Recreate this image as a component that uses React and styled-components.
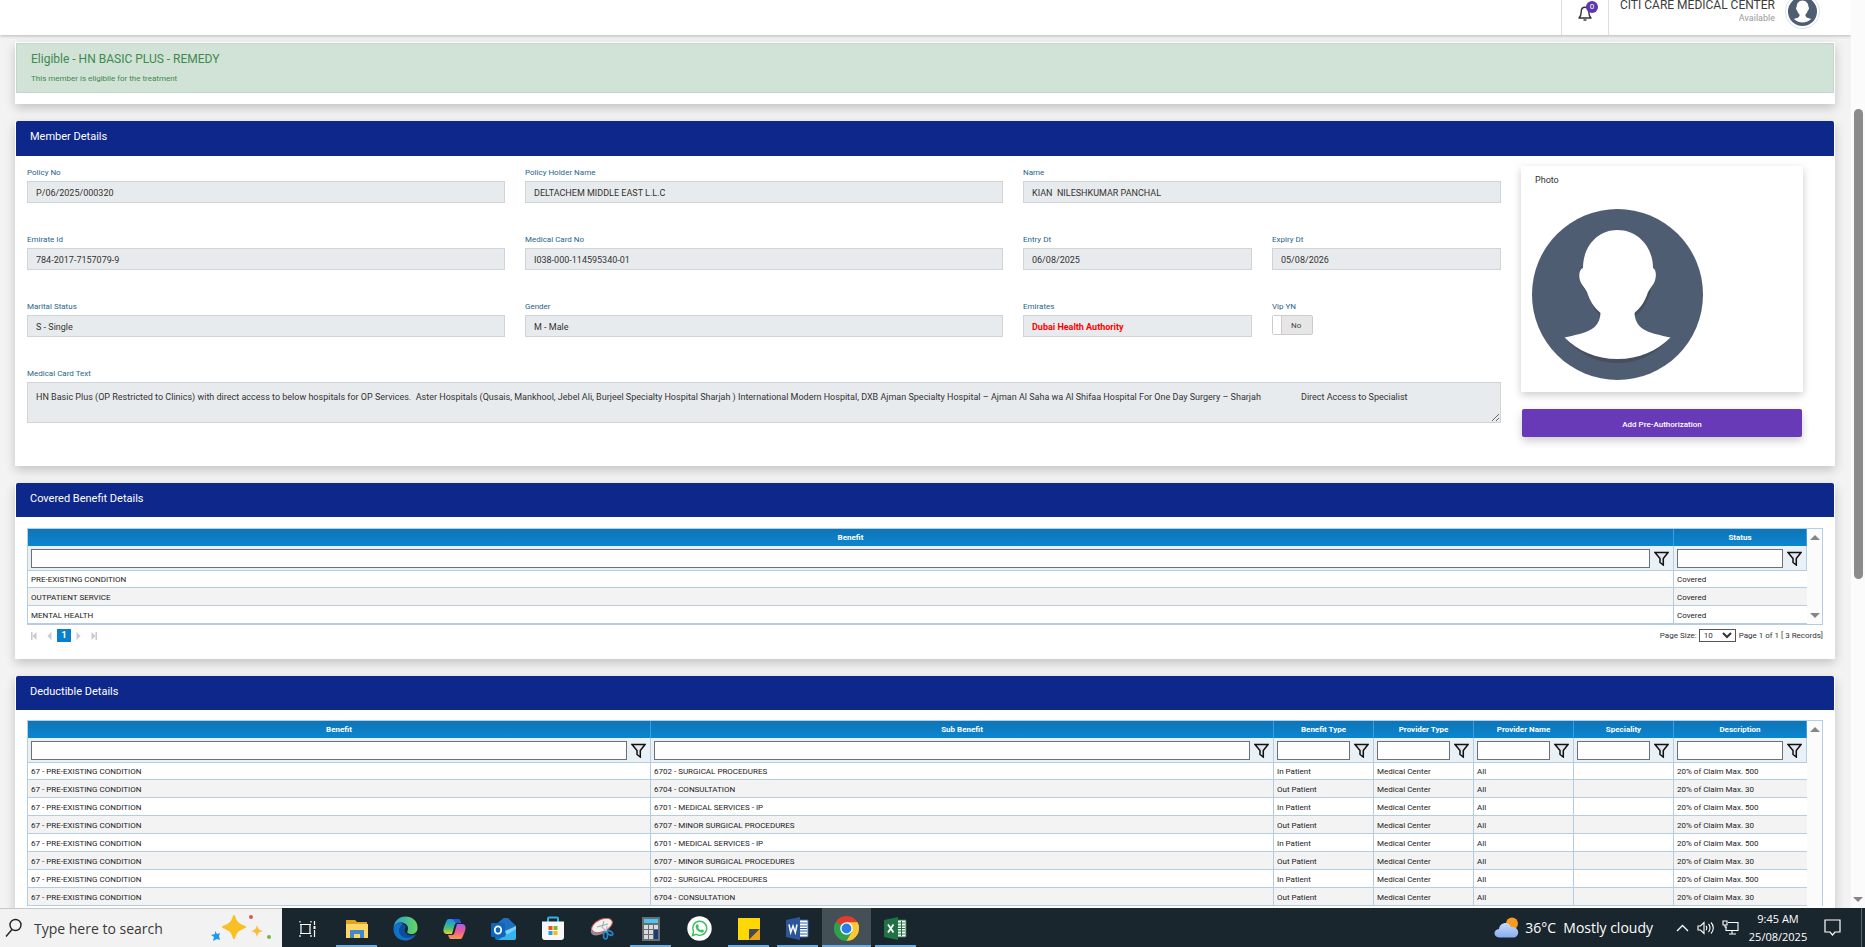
import React from 'react';
import styled, { createGlobalStyle, css } from 'styled-components';

const GlobalStyle = createGlobalStyle`
    * {
        box-sizing: border-box;
    }
    body {
        margin: 0;
        font-family: Roboto, sans-serif;
        color: #333;
        background: #f3f3f3;
    }
    input, select, textarea, button {
        font-family: inherit;
    }
`;

const Screen = styled.div`
    display: flex;
    flex-direction: column;
    height: 100vh;
    overflow: hidden;
`;

const Viewport = styled.div`
    display: flex;
    flex: 1;
    min-height: 0;
`;

const Page = styled.div`
    display: flex;
    flex-direction: column;
    flex: 1;
    min-width: 0;
    overflow: hidden;
`;

const PageScrollbar = styled.div`
    display: flex;
    flex-direction: column;
    align-items: center;
    justify-content: space-between;
    width: 14px;
    padding: 109px 0 6px;
    background: #fbfbfb;
`;

const Thumb = styled.div`
    width: 9px;
    height: 470px;
    border-radius: 5px;
    background: #8b8b8b;
`;

const Triangle = styled.span`
    width: 0;
    height: 0;
    border: 5px solid transparent;
    ${({ $down }) => $down ? css`
        border-bottom: 0;
        border-top-color: #858585;
    ` : css`
        border-top: 0;
        border-bottom-color: #858585;
    `}
`;

/* header */

const HeaderClip = styled.header`
    display: flex;
    align-items: flex-end;
    flex: none;
    height: 35px;
    overflow: hidden;
    background: #fff;
    box-shadow: 0 1px 3px rgba(0, 0, 0, 0.25);
    z-index: 1;
`;

const HeaderBar = styled.div`
    display: flex;
    align-items: center;
    justify-content: flex-end;
    flex: 1;
    height: 48px;
    padding-right: 31px;
`;

const BellButton = styled.button`
    position: relative;
    display: flex;
    align-items: center;
    justify-content: center;
    width: 48px;
    height: 100%;
    padding: 4px 0 0;
    border: solid #dedede;
    border-width: 0 1px;
    background: none;
`;

const Badge = styled.span`
    position: absolute;
    top: 14px;
    left: 24px;
    width: 12px;
    height: 12px;
    border-radius: 6px;
    background: #5d37ae;
    color: #fff;
    font-size: 8px;
    line-height: 12px;
`;

const Account = styled.div`
    display: flex;
    flex-direction: column;
    align-items: flex-end;
    width: 166px;
    margin-right: 10px;
    font-size: 12px;
    line-height: 14px;
    white-space: nowrap;
    color: #3c3c3c;
    span {
        font-size: 9px;
        line-height: 12px;
        color: #999;
    }
`;

const AvatarRing = styled.div`
    display: flex;
    padding: 2px;
    border: 1px solid #dde3ea;
    border-radius: 50%;
`;

/* cards */

const Content = styled.main`
    display: flex;
    flex-direction: column;
    gap: 17px;
    padding: 7px 16px 0 15px;
`;

const Card = styled.section`
    flex: none;
    padding: 0 1px ${({ $bottom }) => $bottom}px;
    background: #fff;
    box-shadow: 0 4px 10px rgba(0, 0, 0, 0.2);
`;

const Alert = styled.div`
    margin-top: 1px;
    height: 50px;
    padding: 6px 14px;
    border: 1px solid #c1d8c8;
    background: #d1e2d7;
    color: #3f8a4e;
`;

const AlertTitle = styled.h1`
    margin: 0;
    font-size: 12px;
    font-weight: 400;
    line-height: 18px;
`;

const AlertText = styled.p`
    margin: 5px 0 0;
    font-size: 8px;
    line-height: 12px;
`;

const CardTitle = styled.h2`
    margin: 0;
    height: ${({ $tall }) => $tall ? 35 : 34}px;
    padding: 8px 14px;
    border-radius: 2px 2px 0 0;
    background: #0d278a;
    color: #fff;
    font-size: 11px;
    font-weight: 400;
    line-height: 16px;
`;

const MemberBody = styled.div`
    display: flex;
    align-items: flex-start;
    gap: 20px;
    padding: 10px 31px 0 11px;
`;

const Form = styled.form`
    display: grid;
    grid-template-columns: repeat(6, 1fr);
    column-gap: 20px;
    row-gap: 31px;
    flex: 1;
    padding-top: 1px;
`;

const Field = styled.div`
    display: flex;
    flex-direction: column;
    align-items: stretch;
    grid-column: span ${({ $span }) => $span};
    min-width: 0;
`;

const Label = styled.label`
    margin-bottom: 3px;
    color: #26658a;
    font-size: 8px;
    line-height: 11px;
`;

const control = css`
    width: 100%;
    border: 1px solid #cfd4d9;
    border-radius: 0;
    background: #e8ebed;
    color: ${({ $alert }) => $alert ? '#f00' : '#333'};
    font-size: 9px;
    font-weight: ${({ $alert }) => $alert ? 700 : 400};
    outline: 0;
`;

const TextInput = styled.input`
    ${control}
    height: 22px;
    padding: 1px 8px 0;
`;

const TextArea = styled.textarea`
    ${control}
    display: block;
    height: 41px;
    padding: 8px;
    line-height: 12px;
`;

const Toggle = styled.label`
    display: flex;
    align-items: center;
    width: 41px;
    height: 20px;
    border: 1px solid #ccc;
    border-radius: 2px;
    background: #e6e6e6;
    font-size: 8px;
    color: #444;
    input {
        appearance: none;
        width: 9px;
        height: 18px;
        margin: 0 9px 0 0;
        border-right: 1px solid #ccc;
        background: #fff;
    }
`;

const Side = styled.aside`
    display: flex;
    flex-direction: column;
    gap: 17px;
    width: 282px;
`;

const PhotoCard = styled.figure`
    margin: 0;
    height: 226px;
    padding: 7px 11px;
    background: #fff;
    box-shadow: 0 3px 8px rgba(0, 0, 0, 0.2);
    svg {
        display: block;
    }
`;

const PhotoCaption = styled.figcaption`
    margin: 0 0 21px 3px;
    font-size: 9px;
    line-height: 15px;
`;

const PrimaryButton = styled.button`
    height: 28px;
    margin: 0 1px;
    padding: 2px 0 0;
    border: 0;
    border-radius: 2px;
    background: #683ab7;
    box-shadow: 0 4px 8px rgba(0, 0, 0, 0.2);
    color: #fff;
    font-size: 8px;
    font-weight: 500;
`;

/* grids */

const GridWrap = styled.div`
    padding: ${({ $top }) => $top}px 11px 0;
`;

const GridFrame = styled.div`
    display: flex;
    border: 1px solid #b5cde2;
    border-top-color: #a9d3ef;
    ${({ $cut }) => $cut && 'border-bottom: 0;'}
`;

const Table = styled.table`
    flex: 1;
    width: 100%;
    table-layout: fixed;
    border-collapse: separate;
    border-spacing: 0;
    font-size: 8px;
`;

const HeadCell = styled.th`
    width: ${({ $width }) => $width ? `${$width}px` : 'auto'};
    height: 17px;
    padding: 0;
    border-right: 1px solid #3f9edc;
    background: linear-gradient(#1074b6, #0a86d2);
    color: #fff;
    font-weight: 700;
    line-height: 16px;
`;

const FilterCell = styled.td`
    height: 25px;
    padding: 0 4px 0 3px;
    border: solid #b5cde2;
    border-width: 0 1px 1px 0;
    background: #e9f0f6;
    div {
        display: flex;
        align-items: center;
        gap: 4px;
    }
    input {
        flex: 1;
        min-width: 0;
        height: 19px;
        padding: 0 2px;
        border: 1px solid #6f6f78;
        background: #fff;
        font-size: 8px;
    }
    button {
        display: flex;
        padding: 0;
        border: 0;
        background: none;
    }
`;

const Row = styled.tr`
    height: 18px;
    &:first-child {
        height: 17px;
    }
    &:nth-child(even) {
        background: #f3f3f4;
    }
`;

const Cell = styled.td`
    padding: 2px 3px 0;
    border: solid #b5cde2;
    border-width: 0 1px 1px 0;
    color: #222;
    line-height: 10px;
    white-space: nowrap;
    &:last-child {
        border-right: 0;
    }
`;

const GridScrollbar = styled.div`
    display: flex;
    flex-direction: column;
    align-items: center;
    justify-content: space-between;
    width: 15px;
    padding: 6px 0;
    background: #fbfbfb;
`;

const Pager = styled.div`
    display: flex;
    align-items: center;
    justify-content: space-between;
    height: 13px;
    margin-top: 4px;
    font-size: 8px;
    div {
        display: flex;
        align-items: center;
    }
`;

const PageNav = styled.div`
    gap: 1px;
    button {
        display: flex;
        padding: 0 3px;
        border: 0;
        background: none;
    }
`;

const CurrentPage = styled.strong`
    width: 14px;
    background: #0a7fcb;
    color: #fff;
    font-size: 9px;
    line-height: 13px;
    text-align: center;
`;

const PageSize = styled.select`
    width: 37px;
    height: 13px;
    margin: 0 3px 0 2px;
    padding: 0;
    border: 1px solid #555;
    border-radius: 0;
    background: #fff;
    color: #333;
    font-size: 8px;
    line-height: 10px;
`;

/* taskbar */

const Taskbar = styled.footer`
    display: flex;
    align-items: stretch;
    flex: none;
    height: 39px;
    background: #1a262d;
    color: #fff;
    font-family: 'Open Sans', sans-serif;
    z-index: 1;
`;

const Search = styled.label`
    display: flex;
    align-items: center;
    width: 282px;
    padding: 0 10px 0 5px;
    border-top: 1px solid #c5c8ca;
    background: #f2f2f2;
    input {
        flex: 1;
        min-width: 0;
        margin-left: 11px;
        padding: 0;
        border: 0;
        background: none;
        font-size: 14px;
        outline: 0;
    }
    input::placeholder {
        color: #3a3a3a;
    }
`;

const Apps = styled.nav`
    display: flex;
    flex: 1;
    padding-left: 1px;
`;

const AppButton = styled.button`
    display: flex;
    align-items: center;
    justify-content: center;
    width: 49px;
    padding: 2px 0 0;
    border: 0;
    background: ${({ $active }) => $active ? '#454f56' : 'none'};
    box-shadow: ${({ $open }) => $open ? 'inset 0 -2px #6dabdd' : 'none'};
    ${({ $open, $active }) => $open && !$active && css`
        width: 41px;
        margin: 0 4px;
    `}
`;

const Tray = styled.div`
    display: flex;
    align-items: center;
    button {
        display: flex;
        align-items: center;
        padding: 0;
        border: 0;
        background: none;
        color: inherit;
        font-family: inherit;
    }
`;

const Weather = styled.button`
    gap: 6px;
    margin-right: 23px;
    font-size: 14px;
    white-space: pre;
`;

const TrayIcons = styled.div`
    display: flex;
    align-items: center;
    gap: 8px;
    margin-right: 9px;
`;

const Clock = styled.time`
    width: 60px;
    margin-right: 16px;
    font-size: 11px;
    line-height: 18px;
    text-align: center;
    white-space: nowrap;
`;

const ShowDesktop = styled.span`
    align-self: stretch;
    width: 4px;
    margin-left: 20px;
    border-left: 1px solid #5d666c;
`;

/* drawings */

const Avatar = ({ size }) => (
    <svg width={size} height={size} viewBox="0 0 171 171" role="img" aria-label="Member photo">
        <circle cx="85.500" cy="85.500" r="85.500" fill="#4e5d72" />
        <path d="M48 72c2 6 5 9 7 12 3 9 8 17 13 23l35 0c8-6 13-15 16-25l-2-8zM33 129c14 15 30 25 52.500 25S124 144 138 129l-40-4z" fill="#454f5f" />
        <path d="M85.500 21C65 21 51 38 51 59c-5 2-5 12 0 18 2 3 4 5 5 9 3 8 7 13 12.500 18-1 18-16 20-36 24.500C46 142 64 150 85.500 150S125 142 138.500 128.500c-20-4.500-35-6.500-36-24.500 5.500-5 9.500-10 12.500-18 1-4 3-6 5-9 5-6 5-16 1-18C121 38 106 21 85.500 21z" fill="#fff" />
    </svg>
);

const BellIcon = () => (
    <svg width="16" height="17" viewBox="0 0 16 17" fill="none" stroke="#333" strokeWidth="1.400" strokeLinejoin="round">
        <path d="M2 13h12c-2-2-2.200-3-2.200-6 0-3-1.600-4.700-3.800-4.700S4.200 4 4.200 7c0 3-.2 4-2.200 6z" />
        <path d="M6.500 15h3" />
    </svg>
);

const FilterIcon = () => (
    <svg width="15" height="15" viewBox="0 0 15 15">
        <path d="M1 1.500h13L9.300 7.500v6.500L6 11.500v-4z" fill="#e4e8ee" stroke="#111" strokeWidth="1.500" />
    </svg>
);

const NavIcon = ({ bar, flip }) => (
    <svg width="8" height="8" viewBox="0 0 8 8" fill="#c9c9ce">
        <g transform={flip ? 'rotate(180 4 4)' : undefined}>
            {bar && <path d="M1 0h1.500v8H1z" />}
            <path d="M6.500 0v8L2.500 4z" />
        </g>
    </svg>
);

const SearchIcon = () => (
    <svg width="18" height="20" viewBox="0 0 18 20" fill="none" stroke="#222" strokeWidth="1.400">
        <circle cx="10.500" cy="7" r="5.500" />
        <path d="M7 11.500L1 18.500" />
    </svg>
);

const Sparkles = () => (
    <svg width="62" height="30" viewBox="0 0 62 30">
        <path d="M24 3c2 7 4 8 11 11-7 3-9 4-11 11-2-7-4-8-11-11 7-3 9-4 11-11z" fill="#f9c026" stroke="#f9c026" strokeWidth="2" strokeLinejoin="round" />
        <path d="M47 12c1 4 2 5 6 6-4 1-5 2-6 6-1-4-2-5-6-6 4-1 5-2 6-6z" fill="#f5bd3a" />
        <path d="M5 18l2 3 3-1-1 3 1 4-3-1-4 2 1-4-3-2 4-1z" fill="#1d9bea" />
        <circle cx="41" cy="4" r="2" fill="#dd5a3a" />
        <circle cx="59" cy="24" r="2" fill="#7ab648" />
    </svg>
);

const TaskViewIcon = () => (
    <svg width="18" height="18" viewBox="0 0 18 18" fill="none" stroke="#fff" strokeWidth="1.200">
        <path d="M1 2.500V1M12 2.500V1M1 4.500h11M1 13.500h11M1 17v-2M12 17v-2M2 4.500v9M11 4.500v9M15.500 1v4M15.500 10v7" />
        <path d="M14.500 6h2v3h-2z" fill="#fff" stroke="none" />
    </svg>
);

const ExplorerIcon = () => (
    <svg width="22" height="20" viewBox="0 0 22 20">
        <path d="M0 1h9l2 2h10v15H0z" fill="#e3a31c" />
        <path d="M0 5h22v14H0z" fill="#fcd667" />
        <path d="M4 19v-8h14v8h-4v-4H8v4z" fill="#4389ca" />
    </svg>
);

const EdgeIcon = () => (
    <svg width="25" height="25" viewBox="0 0 25 25">
        <defs>
            <linearGradient id="edgeTop" x1="0" x2="1">
                <stop offset="0" stopColor="#239de0" />
                <stop offset="1" stopColor="#67d957" />
            </linearGradient>
        </defs>
        <path d="M0.500 12C1 5 6 .5 12.500.5S25 5 24.500 12c0 4-3 6-6 6-3 0-5-1-4-3 1-2 1-5-2-7C8 5 2 7 .5 12z" fill="url(#edgeTop)" />
        <path d="M.5 12C2 7 7 6 11 8c-3 1-5 4-4 8 1 4 6 6 10 5 3-.5 5-2 6-3-2 4-6 6.500-10.500 6.500C5 24.500 0 19 .5 12z" fill="#1272c9" />
        <path d="M9 9c-4 3-4 9 1 12 4 2 9 1 13-3-3 2-8 2-10-1-2-2-1-5 0-6-1-2-2-3-4-2z" fill="#0b4f9c" />
    </svg>
);

const CopilotIcon = () => (
    <svg width="23" height="22" viewBox="0 0 23 22">
        <defs>
            <linearGradient id="copilotLeft" x1="0" x2="0" y1="0" y2="1">
                <stop offset="0" stopColor="#1c8df0" />
                <stop offset=".6" stopColor="#43c07b" />
                <stop offset="1" stopColor="#f0cb30" />
            </linearGradient>
            <linearGradient id="copilotRight" x1="0" x2="0" y1="0" y2="1">
                <stop offset="0" stopColor="#a660ec" />
                <stop offset=".5" stopColor="#ee5a96" />
                <stop offset="1" stopColor="#fb9a4b" />
            </linearGradient>
        </defs>
        <path d="M6 1h9c2 0 2 2 3 4h-4c-2 0-2 1-3 4l-2 7H4c-4 0-4-4-3-7l2-5c1-2 1-3 3-3z" fill="url(#copilotLeft)" />
        <path d="M17 21H8c-2 0-2-2-3-4h4c2 0 2-1 3-4l2-7h5c4 0 4 4 3 7l-2 5c-1 2-1 3-3 3z" fill="url(#copilotRight)" />
        <path d="M6 1h9c2 0 2 2 3 4h-5c-2-1-2-4-5-4z" fill="#2257d6" />
    </svg>
);

const OutlookIcon = () => (
    <svg width="25" height="24" viewBox="0 0 25 24">
        <path d="M4 8L13 1h3l9 8v12c0 1-1 2-2 2H6c-1 0-2-1-2-2z" fill="#1173c6" />
        <path d="M8 5l5-4h4l8 8-11 6z" fill="#1d6fc0" />
        <path d="M14 14l11-5v5l-9 5z" fill="#7fd0f7" />
        <path d="M25 12v9c0 1-1 2-2 2H7z" fill="#36b4f0" />
        <rect y="6" width="14" height="14" rx="1" fill="#0f65bb" />
        <ellipse cx="7" cy="13" rx="3.200" ry="3.600" fill="none" stroke="#fff" strokeWidth="1.800" />
    </svg>
);

const StoreIcon = () => (
    <svg width="24" height="25" viewBox="0 0 24 25">
        <path d="M7 6V2.500C7 2 7.500 1.500 8 1.500h8c.5 0 1 .5 1 1V6" fill="none" stroke="#2cb3e8" strokeWidth="2" />
        <path d="M1 5.500h22V21c0 2-1 3-3 3H4c-2 0-3-1-3-3z" fill="#f6f7f8" />
        <path d="M7.500 10h4v4h-4z" fill="#f04e23" />
        <path d="M12.500 10h4v4h-4z" fill="#7fb920" />
        <path d="M7.500 15h4v4h-4z" fill="#1fa2e8" />
        <path d="M12.500 15h4v4h-4z" fill="#fbb813" />
    </svg>
);

const SnipIcon = () => (
    <svg width="24" height="22" viewBox="0 0 24 22">
        <ellipse cx="11" cy="10" rx="11" ry="6" transform="rotate(-28 11 10)" fill="#8b8f94" />
        <ellipse cx="12" cy="7.500" rx="11" ry="6" transform="rotate(-25 12 7.500)" fill="#f4f1f1" stroke="#d65a5a" />
        <path d="M7 9l11-3M14 3l-2 7" stroke="#9aa4ab" fill="none" />
        <path d="M12 9l5 5M17 8l-1 6" stroke="#bfc8cf" strokeWidth="1.500" />
        <ellipse cx="15.500" cy="17.500" rx="2" ry="3.500" fill="none" stroke="#2a86cc" strokeWidth="1.600" />
        <ellipse cx="20" cy="15" rx="3" ry="1.800" transform="rotate(35 20 15)" fill="none" stroke="#2a86cc" strokeWidth="1.600" />
    </svg>
);

const CalculatorIcon = () => (
    <svg width="18" height="24" viewBox="0 0 18 24">
        <rect width="18" height="24" fill="#686e73" />
        <rect x="2" y="2" width="14" height="4" fill="#4cc4ee" />
        {[8, 13, 18].map(y => [2, 7, 12].map(x => (
            <rect key={`${x}-${y}`} x={x} y={y} width="4" height="4" fill="#d8dbdd" />
        )))}
        <rect x="12" y="13" width="4" height="9" fill="#173f76" />
    </svg>
);

const WhatsAppIcon = () => (
    <svg width="25" height="25" viewBox="0 0 25 25">
        <circle cx="12.500" cy="12.500" r="12.200" fill="#fff" />
        <path d="M5.500 19.500l1-4a7 7 0 1 1 2.700 2.800z" fill="none" stroke="#42c065" strokeWidth="1.500" />
        <path d="M9.500 8.500l1.500-.2 1 2.200-.9 1.200c.6 1.200 1.500 2 2.700 2.500l1.200-1 2 1.200c0 1.500-1.200 2.200-2.500 2.100-3-.4-5.500-3-5.900-5.700 0-1 .3-1.800.9-2.300z" fill="#42c065" />
    </svg>
);

const StickyIcon = () => (
    <svg width="22" height="22" viewBox="0 0 22 22">
        <path d="M0 0h22v22H0z" fill="#fed804" />
        <path d="M11 22V11h11z" fill="#464a4e" />
        <path d="M11 22l11-11v11z" fill="#e9a418" />
    </svg>
);

const WordIcon = () => (
    <svg width="23" height="23" viewBox="0 0 23 23">
        <path d="M12 3h10v17H12z" fill="#fff" stroke="#2d5ca6" />
        <path d="M13 6h8M13 9h8M13 11.500h8M13 14h8M13 17h8" stroke="#2d5ca6" />
        <path d="M0 3l14-3v23L0 20z" fill="#2b579a" />
        <path d="M3 7.500l1.700 8L7 9l2.300 6.500 1.700-8" fill="none" stroke="#fff" strokeWidth="1.500" />
    </svg>
);

const ExcelIcon = () => (
    <svg width="23" height="23" viewBox="0 0 23 23">
        <path d="M12 3h10v17H12z" fill="#fff" stroke="#207245" />
        <path d="M14 6h7M14 9h7M14 11.500h7M14 14h7M14 17h7M17.500 4v15" stroke="#207245" />
        <path d="M0 3l14-3v23L0 20z" fill="#207245" />
        <path d="M4 7.500l5.500 8M9.500 7.500L4 15.500" fill="none" stroke="#fff" strokeWidth="1.800" />
    </svg>
);

const ChromeIcon = () => (
    <svg width="25" height="25" viewBox="0 0 24 24">
        <path d="M12 12L1.600 6A12 12 0 0 1 22.400 6z" fill="#e33b2e" />
        <path d="M12 12l10.400-6A12 12 0 0 1 12 24z" fill="#fcc934" />
        <path d="M12 12v12A12 12 0 0 1 1.600 6z" fill="#2da14e" />
        <path d="M12 6h10.400c1 2 1.600 4 1.600 6l-6 1z" fill="#fcc934" />
        <path d="M6.800 15L1.600 6 9 9zM17.200 15L12 24l-1-7z" fill="#2da14e" />
        <circle cx="12" cy="12" r="6" fill="#fff" />
        <circle cx="12" cy="12" r="4.700" fill="#2a7de9" />
    </svg>
);

const WeatherIcon = () => (
    <svg width="25" height="21" viewBox="0 0 25 21">
        <defs>
            <linearGradient id="cloud" x1="0" x2="0" y1="0" y2="1">
                <stop offset="0" stopColor="#c6dafa" />
                <stop offset="1" stopColor="#87aef0" />
            </linearGradient>
        </defs>
        <circle cx="18" cy="6.500" r="6" fill="#f89b22" />
        <path d="M5 20.500c-6-.5-6-8 0-8.500 1-7 10-8 12-2 9-1 9 10 3 10.500z" fill="url(#cloud)" />
    </svg>
);

const CaretIcon = () => (
    <svg width="13" height="8" viewBox="0 0 13 8" fill="none" stroke="#fff" strokeWidth="1.300">
        <path d="M1 7l5.500-5.500L12 7" />
    </svg>
);

const SpeakerIcon = () => (
    <svg width="17" height="14" viewBox="0 0 17 14" fill="none" stroke="#fff" strokeWidth="1.100">
        <path d="M1 5h2.500L7 1.500v11L3.500 9H1zM9 5c1 1 1 3 0 4M11.500 3c2 2 2 6 0 8M14 1.500c3 3 3 8 0 11" />
    </svg>
);

const NetworkIcon = () => (
    <svg width="17" height="15" viewBox="0 0 17 15" fill="none" stroke="#fff" strokeWidth="1.100">
        <path d="M6 2.500h10v8H4V7M10 10.500V14M7 14h7M1 1h4v4H1zM3 5v2h2" />
    </svg>
);

const NoticeIcon = () => (
    <svg width="17" height="17" viewBox="0 0 17 17" fill="none" stroke="#fff" strokeWidth="1.200">
        <path d="M1 1h15v12h-5l-2.500 3L6 13H1z" />
    </svg>
);

/* data */

const cardText = 'HN Basic Plus (OP Restricted to Clinics) with direct access to below hospitals for OP Services.  Aster Hospitals (Qusais, Mankhool, Jebel Ali, Burjeel Specialty Hospital Sharjah ) International Modern Hospital, DXB Ajman Specialty Hospital – Ajman Al Saha wa Al Shifaa Hospital For One Day Surgery – Sharjah' + ' '.repeat(18) + 'Direct Access to Specialist';

const fields = [
    { id: 'policyNo', label: 'Policy No', value: 'P/06/2025/000320', span: 2 },
    { id: 'policyHolder', label: 'Policy Holder Name', value: 'DELTACHEM MIDDLE EAST L.L.C', span: 2 },
    { id: 'name', label: 'Name', value: 'KIAN  NILESHKUMAR PANCHAL', span: 2 },
    { id: 'emirateId', label: 'Emirate Id', value: '784-2017-7157079-9', span: 2 },
    { id: 'cardNo', label: 'Medical Card No', value: 'I038-000-114595340-01', span: 2 },
    { id: 'entryDt', label: 'Entry Dt', value: '06/08/2025', span: 1 },
    { id: 'expiryDt', label: 'Expiry Dt', value: '05/08/2026', span: 1 },
    { id: 'marital', label: 'Marital Status', value: 'S - Single', span: 2 },
    { id: 'gender', label: 'Gender', value: 'M - Male', span: 2 },
    { id: 'emirates', label: 'Emirates', value: 'Dubai Health Authority', span: 1, alert: true }
];

const benefitColumns = [{ name: 'Benefit' }, { name: 'Status', width: 133 }];

const benefitRows = [
    ['PRE-EXISTING CONDITION', 'Covered'],
    ['OUTPATIENT SERVICE', 'Covered'],
    ['MENTAL HEALTH', 'Covered']
];

const deductibleColumns = [
    { name: 'Benefit' },
    { name: 'Sub Benefit' },
    { name: 'Benefit Type', width: 100 },
    { name: 'Provider Type', width: 100 },
    { name: 'Provider Name', width: 100 },
    { name: 'Speciality', width: 100 },
    { name: 'Description', width: 133 }
];

const deductible = (sub, inPatient) => [
    '67 - PRE-EXISTING CONDITION',
    sub,
    inPatient ? 'In Patient' : 'Out Patient',
    'Medical Center',
    'All',
    '',
    inPatient ? '20% of Claim Max. 500' : '20% of Claim Max. 30'
];

const deductibleRows = [
    deductible('6702 - SURGICAL PROCEDURES', true),
    deductible('6704 - CONSULTATION', false),
    deductible('6701 - MEDICAL SERVICES - IP', true),
    deductible('6707 - MINOR SURGICAL PROCEDURES', false),
    deductible('6701 - MEDICAL SERVICES - IP', true),
    deductible('6707 - MINOR SURGICAL PROCEDURES', false),
    deductible('6702 - SURGICAL PROCEDURES', true),
    deductible('6704 - CONSULTATION', false)
];

const apps = [
    { name: 'Task View', icon: <TaskViewIcon /> },
    { name: 'File Explorer', icon: <ExplorerIcon />, open: true },
    { name: 'Edge', icon: <EdgeIcon /> },
    { name: 'Copilot', icon: <CopilotIcon /> },
    { name: 'Outlook', icon: <OutlookIcon /> },
    { name: 'Store', icon: <StoreIcon /> },
    { name: 'Snipping Tool', icon: <SnipIcon /> },
    { name: 'Calculator', icon: <CalculatorIcon />, open: true },
    { name: 'WhatsApp', icon: <WhatsAppIcon /> },
    { name: 'Sticky Notes', icon: <StickyIcon />, open: true },
    { name: 'Word', icon: <WordIcon />, open: true },
    { name: 'Chrome', icon: <ChromeIcon />, open: true, active: true },
    { name: 'Excel', icon: <ExcelIcon />, open: true }
];

const DataGrid = ({ columns, rows, cut }) => (
    <GridFrame $cut={cut}>
        <Table>
            <thead>
                <tr>
                    {columns.map(({ name, width }) => (
                        <HeadCell key={name} $width={width} scope="col">{name}</HeadCell>
                    ))}
                </tr>
                <tr>
                    {columns.map(({ name }) => (
                        <FilterCell key={name}>
                            <div>
                                <input type="text" aria-label={`Filter ${name}`} />
                                <button type="button" aria-label={`${name} filter options`}><FilterIcon /></button>
                            </div>
                        </FilterCell>
                    ))}
                </tr>
            </thead>
            <tbody>
                {rows.map((row, i) => (
                    <Row key={i}>
                        {row.map((value, j) => <Cell key={j}>{value}</Cell>)}
                    </Row>
                ))}
            </tbody>
        </Table>
        <GridScrollbar>
            <Triangle />
            {!cut && <Triangle $down />}
        </GridScrollbar>
    </GridFrame>
);

const MemberForm = () => (
    <Form>
        {fields.map(({ id, label, value, span, alert }) => (
            <Field key={id} $span={span}>
                <Label htmlFor={id}>{label}</Label>
                <TextInput id={id} defaultValue={value} readOnly $alert={alert} />
            </Field>
        ))}
        <Field $span={1}>
            <Label htmlFor="vip">Vip YN</Label>
            <Toggle>
                <input id="vip" type="checkbox" />
                No
            </Toggle>
        </Field>
        <Field $span={6}>
            <Label htmlFor="cardText">Medical Card Text</Label>
            <TextArea id="cardText" defaultValue={cardText} readOnly />
        </Field>
    </Form>
);

export default function App() {
    return (
        <Screen>
            <GlobalStyle />
            <Viewport>
                <Page>
                    <HeaderClip>
                        <HeaderBar>
                            <BellButton type="button" aria-label="Notifications">
                                <BellIcon />
                                <Badge>0</Badge>
                            </BellButton>
                            <Account>
                                CITI CARE MEDICAL CENTER
                                <span>Available</span>
                            </Account>
                            <AvatarRing><Avatar size={29} /></AvatarRing>
                        </HeaderBar>
                    </HeaderClip>
                    <Content>
                        <Card $bottom={11}>
                            <Alert>
                                <AlertTitle>Eligible - HN BASIC PLUS - REMEDY</AlertTitle>
                                <AlertText>This member is eligibile for the treatment</AlertText>
                            </Alert>
                        </Card>
                        <Card $bottom={29}>
                            <CardTitle $tall>Member Details</CardTitle>
                            <MemberBody>
                                <MemberForm />
                                <Side>
                                    <PhotoCard>
                                        <PhotoCaption>Photo</PhotoCaption>
                                        <Avatar size={171} />
                                    </PhotoCard>
                                    <PrimaryButton type="button">Add Pre-Authorization</PrimaryButton>
                                </Side>
                            </MemberBody>
                        </Card>
                        <Card $bottom={17}>
                            <CardTitle>Covered Benefit Details</CardTitle>
                            <GridWrap $top={11}>
                                <DataGrid columns={benefitColumns} rows={benefitRows} />
                                <Pager>
                                    <PageNav>
                                        <button type="button" aria-label="First page"><NavIcon bar /></button>
                                        <button type="button" aria-label="Previous page"><NavIcon /></button>
                                        <CurrentPage>1</CurrentPage>
                                        <button type="button" aria-label="Next page"><NavIcon flip /></button>
                                        <button type="button" aria-label="Last page"><NavIcon bar flip /></button>
                                    </PageNav>
                                    <div>
                                        <label htmlFor="pageSize">Page Size:</label>
                                        <PageSize id="pageSize" defaultValue="10">
                                            <option>10</option>
                                            <option>20</option>
                                        </PageSize>
                                        Page 1 of 1 [ 3 Records]
                                    </div>
                                </Pager>
                            </GridWrap>
                        </Card>
                        <Card $bottom={17}>
                            <CardTitle>Deductible Details</CardTitle>
                            <GridWrap $top={10}>
                                <DataGrid columns={deductibleColumns} rows={deductibleRows} cut />
                            </GridWrap>
                        </Card>
                    </Content>
                </Page>
                <PageScrollbar>
                    <Thumb />
                    <Triangle $down />
                </PageScrollbar>
            </Viewport>
            <Taskbar>
                <Search>
                    <SearchIcon />
                    <input type="search" placeholder="Type here to search" />
                    <Sparkles />
                </Search>
                <Apps>
                    {apps.map(({ name, icon, open, active }) => (
                        <AppButton key={name} type="button" aria-label={name} $open={open} $active={active}>{icon}</AppButton>
                    ))}
                </Apps>
                <Tray>
                    <Weather type="button"><WeatherIcon />36°C  Mostly cloudy</Weather>
                    <TrayIcons>
                        <button type="button" aria-label="Show hidden icons"><CaretIcon /></button>
                        <button type="button" aria-label="Volume"><SpeakerIcon /></button>
                        <button type="button" aria-label="Network"><NetworkIcon /></button>
                    </TrayIcons>
                    <Clock>9:45 AM<br />25/08/2025</Clock>
                    <button type="button" aria-label="Action center"><NoticeIcon /></button>
                    <ShowDesktop />
                </Tray>
            </Taskbar>
        </Screen>
    );
}
